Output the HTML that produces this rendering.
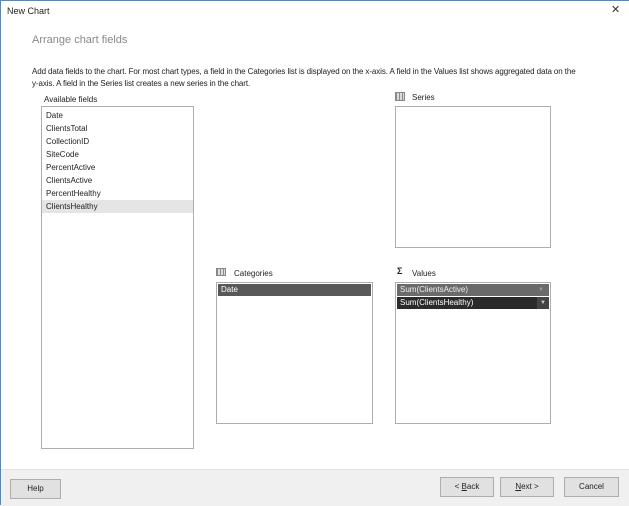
<!DOCTYPE html>
<html><head><style>
body{margin:0;width:629px;height:505px;overflow:hidden;background:#fff;font-family:"Liberation Sans",sans-serif;font-size:8px;color:#222;position:relative}
.a{position:absolute}
.box{position:absolute;border:1px solid #abadb3;background:#fff;box-sizing:border-box}
.it{height:13px;line-height:13px;padding-left:4px}
.btn{position:absolute;background:#e1e1e1;border:1px solid #adadad;box-sizing:border-box;text-align:center;line-height:18px;font-size:8px}
</style></head><body>
<div class="a" style="left:0;top:0;width:629px;height:1px;background:#3c8fd8"></div>
<div class="a" style="left:0;top:0;width:1px;height:505px;background:#3c8fd8"></div>
<div class="a" style="left:7px;top:6px;font-size:9px">New Chart</div>
<div class="a" style="left:611px;top:3px;font-size:11px;color:#333">✕</div>
<div class="a" style="left:32px;top:34px;font-size:11px;color:#888">Arrange chart fields</div>
<div class="a" style="left:32px;top:66px;line-height:12px;width:600px;white-space:nowrap;letter-spacing:-0.1px">Add data fields to the chart. For most chart types, a field in the Categories list is displayed on the x-axis. A field in the Values list shows aggregated data on the<br>y-axis. A field in the Series list creates a new series in the chart.</div>
<div class="a" style="left:44px;top:95px">Available fields</div>
<div class="box" style="left:41px;top:106px;width:153px;height:343px;padding-top:2px">
<div class="it">Date</div><div class="it">ClientsTotal</div><div class="it">CollectionID</div><div class="it">SiteCode</div><div class="it">PercentActive</div><div class="it">ClientsActive</div><div class="it">PercentHealthy</div><div class="it" style="background:#e5e5e5">ClientsHealthy</div>
</div>
<div class="a" style="left:395px;top:92px;width:8px;height:7px;border:1px solid #888;background:repeating-linear-gradient(90deg,#888 0 1px,#ddd 1px 3px)"></div>
<div class="a" style="left:412px;top:93px">Series</div>
<div class="box" style="left:395px;top:106px;width:156px;height:142px"></div>
<div class="a" style="left:216px;top:268px;width:8px;height:6px;border:1px solid #888;background:repeating-linear-gradient(90deg,#888 0 1px,#ddd 1px 3px)"></div>
<div class="a" style="left:234px;top:269px">Categories</div>
<div class="box" style="left:216px;top:282px;width:157px;height:142px;padding:1px">
<div class="it" style="background:#595959;color:#fff;height:12px;line-height:12px;padding-left:3px">Date</div></div>
<div class="a" style="left:397px;top:266px;font-weight:bold;font-size:9px">Σ</div>
<div class="a" style="left:412px;top:269px">Values</div>
<div class="box" style="left:395px;top:282px;width:156px;height:142px;padding:1px">
<div class="it" style="background:#6a6a6a;color:#eee;height:12px;line-height:12px;padding-left:3px;position:relative">Sum(ClientsActive)<span style="position:absolute;right:5px;color:#999;font-size:6px">▼</span></div>
<div class="it" style="background:#2b2b2b;color:#fff;height:12px;line-height:12px;padding-left:3px;margin-top:1px;position:relative">Sum(ClientsHealthy)<span style="position:absolute;right:0;top:0;width:12px;height:12px;background:#444;color:#ccc;font-size:6px;text-align:center">▼</span></div>
</div>
<div class="a" style="left:1px;top:469px;width:628px;height:36px;background:#f0f0f0;border-top:1px solid #e3e3e3"></div>
<div class="btn" style="left:10px;top:479px;width:51px;height:20px">Help</div>
<div class="btn" style="left:440px;top:477px;width:54px;height:20px">&lt; <u>B</u>ack</div>
<div class="btn" style="left:500px;top:477px;width:54px;height:20px"><u>N</u>ext &gt;</div>
<div class="btn" style="left:564px;top:477px;width:55px;height:20px">Cancel</div>
</body></html>
